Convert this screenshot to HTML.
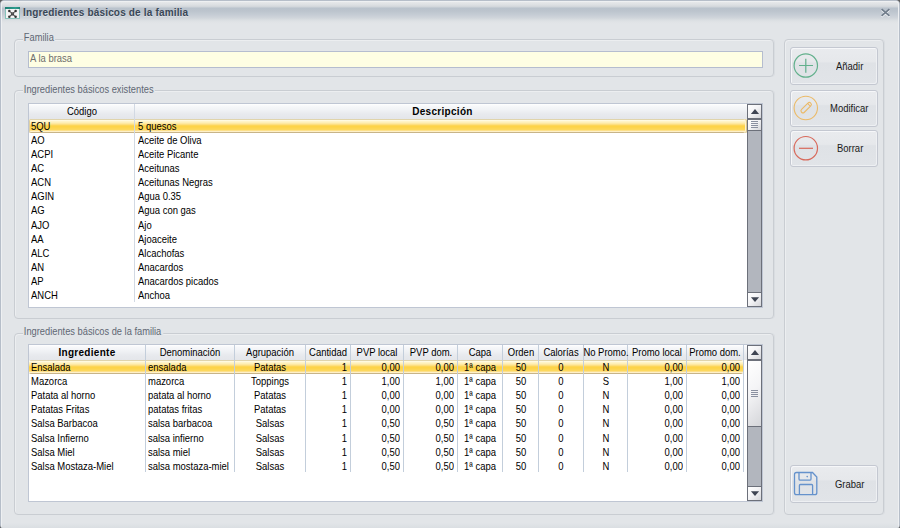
<!DOCTYPE html>
<html><head><meta charset="utf-8"><title>Ingredientes básicos de la familia</title>
<style>
*{margin:0;padding:0;box-sizing:border-box}
html,body{width:900px;height:528px;overflow:hidden;background:#5e5e5e}
body{position:relative;font-family:"Liberation Sans",sans-serif}
.a{position:absolute}
.t{position:absolute;white-space:nowrap;font-size:11px;line-height:14px;color:#000;transform:scaleX(0.86);transform-origin:0 0}
.tr{text-align:right;transform-origin:100% 0}
.tc{text-align:center;transform-origin:50% 0}
.tb{font-size:10px;font-weight:bold;transform:none;letter-spacing:0.3px}
#win{position:absolute;left:0;top:0;width:900px;height:529px;background:#e2e5e8;border:1px solid #b6bec9;border-radius:4px;overflow:hidden}
#win2{position:absolute;left:0;top:0;width:898px;height:527px;border:1px solid #eef0f2;border-bottom:none;border-radius:3px 3px 0 0}
#title{position:absolute;left:0;top:0;width:898px;height:24px;
 background:linear-gradient(to bottom,#e9eaec 0px,#e3e5e7 2px,#dcdfe2 4px,#d0d5da 6px,#b9c2cc 7px,#bcc4cd 10px,#c6cdd5 14px,#d0d5db 17px,#dadee2 19px,#e0e3e6 21px,#e2e5e8 23px)}
.grp{position:absolute;border:1px solid #c9cdd2;border-radius:4px;box-shadow:inset 1px 1px 0 #eceef0,1px 0 0 #d9dde1}
.lbl{color:#5f6774;background:#e2e5e8;padding:0 2px 0 1px;transform:scaleX(0.845)}
.grid{position:absolute;background:#fff;border:1px solid #bfc6d3}
.hdr{position:absolute;height:15px;background:linear-gradient(to bottom,#ffffff 0,#f7f8fa 2px,#f0f2f5 6px,#e8eaee 10px,#e4e6ea 15px)}
.sel{position:absolute;height:14px;border-radius:2px;background:linear-gradient(to bottom,#e0d4ac 0 1px,#fffae0 1px 2px,#fff4c8 2px 3px,#feefb8 3px 4px,#fee8a0 4px 5px,#fddf80 5px 6px,#fdd658 6px 7px,#fdd348 7px 8px,#fdd44c 8px 9px,#fdd654 9px 10px,#fdd85c 10px 11px,#fde08a 11px 12px,#fef0c8 12px 13px,#c8b488 13px 14px)}
.vl{position:absolute;width:1px;background:#c3cedb}
.sb{position:absolute;width:15px;background:#b2b6be;border:1px solid #6c707a}
.sbb{position:absolute;left:0;width:13px;background:linear-gradient(135deg,#ffffff 0%,#f4f4f6 45%,#d5d6da 100%)}
.btn{position:absolute;border:1px solid #c4c8d1;border-radius:3px;background:linear-gradient(to bottom,#e9ebee 0%,#e6e8eb 38%,#dfe2e6 42%,#e1e4e8 100%);box-shadow:inset 1px 1px 0 #f6f7f9,inset -1px -1px 0 #eef0f3}
</style></head>
<body>
<div id="win"><div id="title"></div><div class="a" style="left:0;top:522px;width:898px;height:6px;background:linear-gradient(to bottom,#e2e5e8,#d9dde1)"></div><div id="win2"></div></div><svg class="a" style="left:5px;top:7px" width="15" height="12" viewBox="0 0 15 12">
<defs><linearGradient id="tb" x1="0" x2="1"><stop offset="0" stop-color="#1d7d72"/><stop offset="0.7" stop-color="#2f9f90"/><stop offset="1" stop-color="#1f8276"/></linearGradient></defs>
<rect x="0.5" y="0.5" width="14" height="11" fill="#ececec" stroke="#86c2ba"/>
<rect x="1" y="2" width="13" height="9" fill="#f4f4f4"/>
<rect x="0" y="0" width="15" height="2" fill="url(#tb)"/>
<path d="M4.4 4.1 L10.5 9.7 M10.5 4.1 L4.4 9.7" stroke="#444" stroke-width="1"/>
<circle cx="4.3" cy="3.9" r="1.25" fill="#333"/><circle cx="10.6" cy="3.9" r="1.25" fill="#333"/>
<circle cx="4.3" cy="9.8" r="1.25" fill="#333"/><circle cx="10.6" cy="9.8" r="1.25" fill="#333"/>
<rect x="5.9" y="5.4" width="3.2" height="3.1" fill="#3a3a3a"/>
<rect x="6.4" y="6.6" width="2.2" height="0.6" fill="#9a9a9a"/>
</svg><div class="a" style="left:23px;top:5px;font-size:10px;line-height:16px;font-weight:bold;letter-spacing:0.17px;color:#394757;white-space:nowrap;text-shadow:0 1px 0 rgba(255,255,255,0.35)">Ingredientes básicos de la familia</div><svg class="a" style="left:880px;top:8px" width="11" height="10" viewBox="0 0 11 10">
<path d="M1.6 2.2 L9.4 8.8 M9.4 2.2 L1.6 8.8" stroke="#f4f6f8" stroke-width="1.7"/>
<path d="M1.6 1.2 L9.4 7.8 M9.4 1.2 L1.6 7.8" stroke="#717d8b" stroke-width="1.7"/>
</svg><div class="grp" style="left:14px;top:39px;width:760px;height:38px"></div><div class="t lbl" style="left:23px;top:30px;">Familia</div><div class="a" style="left:28px;top:51px;width:735px;height:17px;background:#fefee3;border:1px solid #b5bdcf"></div><div class="t " style="left:30px;top:51px;color:#6e6e6e">A la brasa</div><div class="grp" style="left:14px;top:90px;width:760px;height:229px"></div><div class="t lbl" style="left:23px;top:82px;">Ingredientes básicos existentes</div><div class="grp" style="left:14px;top:333px;width:760px;height:182px"></div><div class="t lbl" style="left:23px;top:324px;">Ingredientes básicos de la familia</div><div class="grp" style="left:784px;top:39px;width:100px;height:476px"></div><div class="grid" style="left:28px;top:103px;width:735px;height:205px"></div><div class="hdr" style="left:29px;top:104px;width:718px"></div><div class="t tc" style="left:-68.5px;width:300px;top:104px">Código</div><div class="t tc tb" style="left:292.5px;width:300px;top:105px">Descripción</div><div class="sel" style="left:29px;top:119px;width:718px;box-shadow:inset -1px 0 0 #d8c690, inset -2px 0 0 #fff3cc, inset 1px 0 0 #e0d0a0"></div><div class="vl" style="left:134px;top:104px;height:198px;background:#d2d9e3"></div><div class="t" style="left:31px;top:119px">5QU</div><div class="t" style="left:138px;top:119px">5 quesos</div><div class="t" style="left:31px;top:133px">AO</div><div class="t" style="left:138px;top:133px">Aceite de Oliva</div><div class="t" style="left:31px;top:147px">ACPI</div><div class="t" style="left:138px;top:147px">Aceite Picante</div><div class="t" style="left:31px;top:161px">AC</div><div class="t" style="left:138px;top:161px">Aceitunas</div><div class="t" style="left:31px;top:175px">ACN</div><div class="t" style="left:138px;top:175px">Aceitunas Negras</div><div class="t" style="left:31px;top:189px">AGIN</div><div class="t" style="left:138px;top:189px">Agua 0.35</div><div class="t" style="left:31px;top:203px">AG</div><div class="t" style="left:138px;top:203px">Agua con gas</div><div class="t" style="left:31px;top:218px">AJO</div><div class="t" style="left:138px;top:218px">Ajo</div><div class="t" style="left:31px;top:232px">AA</div><div class="t" style="left:138px;top:232px">Ajoaceite</div><div class="t" style="left:31px;top:246px">ALC</div><div class="t" style="left:138px;top:246px">Alcachofas</div><div class="t" style="left:31px;top:260px">AN</div><div class="t" style="left:138px;top:260px">Anacardos</div><div class="t" style="left:31px;top:274px">AP</div><div class="t" style="left:138px;top:274px">Anacardos picados</div><div class="t" style="left:31px;top:288px">ANCH</div><div class="t" style="left:138px;top:288px">Anchoa</div><div class="sb" style="left:747px;top:104px;height:203px"><div class="sbb" style="top:0;height:14px;border-bottom:1px solid #6c707a"></div><svg class="a" style="left:2px;top:3px" width="10" height="7" viewBox="0 0 10 7"><path d="M0.9 6 L5 1.1 L9.1 6Z" fill="#3e4452"/></svg><div class="sbb" style="top:14px;height:12px;border-top:1px solid #6c707a;border-bottom:1px solid #6c707a"></div><div class="a" style="left:3px;top:16px;width:7px;height:1px;background:#8a90a0"></div><div class="a" style="left:3px;top:18px;width:7px;height:1px;background:#8a90a0"></div><div class="a" style="left:3px;top:20px;width:7px;height:1px;background:#8a90a0"></div><div class="a" style="left:3px;top:22px;width:7px;height:1px;background:#8a90a0"></div><div class="sbb" style="top:187px;height:14px;border-top:1px solid #6c707a"></div><svg class="a" style="left:2px;top:191px" width="10" height="7" viewBox="0 0 10 7"><path d="M0.9 1.2 L9.1 1.2 L5 5.9Z" fill="#3e4452"/></svg></div><div class="grid" style="left:28px;top:344px;width:735px;height:158px"></div><div class="hdr" style="left:29px;top:345px;width:718px"></div><div class="sel" style="left:29px;top:360px;width:714px"></div><div class="vl" style="left:145px;top:345px;height:127px"></div><div class="vl" style="left:234px;top:345px;height:127px"></div><div class="vl" style="left:305px;top:345px;height:127px"></div><div class="vl" style="left:350px;top:345px;height:127px"></div><div class="vl" style="left:403px;top:345px;height:127px"></div><div class="vl" style="left:457px;top:345px;height:127px"></div><div class="vl" style="left:502px;top:345px;height:127px"></div><div class="vl" style="left:538px;top:345px;height:127px"></div><div class="vl" style="left:583px;top:345px;height:127px"></div><div class="vl" style="left:627px;top:345px;height:127px"></div><div class="vl" style="left:686px;top:345px;height:127px"></div><div class="vl" style="left:743px;top:345px;height:127px"></div><div class="t tc tb" style="left:-63px;width:300px;top:346px">Ingrediente</div><div class="t tc" style="left:40px;width:300px;top:345px">Denominación</div><div class="t tc" style="left:120px;width:300px;top:345px">Agrupación</div><div class="t tc" style="left:178px;width:300px;top:345px">Cantidad</div><div class="t tc" style="left:227px;width:300px;top:345px">PVP local</div><div class="t tc" style="left:280.5px;width:300px;top:345px">PVP dom.</div><div class="t tc" style="left:330px;width:300px;top:345px">Capa</div><div class="t tc" style="left:370.5px;width:300px;top:345px">Orden</div><div class="t tc" style="left:411px;width:300px;top:345px">Calorías</div><div class="t tc" style="left:455.5px;width:300px;top:345px">No Promo.</div><div class="t tc" style="left:507px;width:300px;top:345px">Promo local</div><div class="t tc" style="left:565px;width:300px;top:345px">Promo dom.</div><div class="t" style="left:31px;top:360px">Ensalada</div><div class="t" style="left:148px;top:360px">ensalada</div><div class="t tc" style="left:120px;width:300px;top:360px">Patatas</div><div class="t tr" style="left:47px;width:300px;top:360px">1</div><div class="t tr" style="left:100px;width:300px;top:360px">0,00</div><div class="t tr" style="left:154px;width:300px;top:360px">0,00</div><div class="t tc" style="left:330px;width:300px;top:360px">1ª capa</div><div class="t tc" style="left:370.5px;width:300px;top:360px">50</div><div class="t tc" style="left:411px;width:300px;top:360px">0</div><div class="t tc" style="left:455.5px;width:300px;top:360px">N</div><div class="t tr" style="left:383px;width:300px;top:360px">0,00</div><div class="t tr" style="left:440px;width:300px;top:360px">0,00</div><div class="t" style="left:31px;top:374px">Mazorca</div><div class="t" style="left:148px;top:374px">mazorca</div><div class="t tc" style="left:120px;width:300px;top:374px">Toppings</div><div class="t tr" style="left:47px;width:300px;top:374px">1</div><div class="t tr" style="left:100px;width:300px;top:374px">1,00</div><div class="t tr" style="left:154px;width:300px;top:374px">1,00</div><div class="t tc" style="left:330px;width:300px;top:374px">1ª capa</div><div class="t tc" style="left:370.5px;width:300px;top:374px">50</div><div class="t tc" style="left:411px;width:300px;top:374px">0</div><div class="t tc" style="left:455.5px;width:300px;top:374px">S</div><div class="t tr" style="left:383px;width:300px;top:374px">1,00</div><div class="t tr" style="left:440px;width:300px;top:374px">1,00</div><div class="t" style="left:31px;top:388px">Patata al horno</div><div class="t" style="left:148px;top:388px">patata al horno</div><div class="t tc" style="left:120px;width:300px;top:388px">Patatas</div><div class="t tr" style="left:47px;width:300px;top:388px">1</div><div class="t tr" style="left:100px;width:300px;top:388px">0,00</div><div class="t tr" style="left:154px;width:300px;top:388px">0,00</div><div class="t tc" style="left:330px;width:300px;top:388px">1ª capa</div><div class="t tc" style="left:370.5px;width:300px;top:388px">50</div><div class="t tc" style="left:411px;width:300px;top:388px">0</div><div class="t tc" style="left:455.5px;width:300px;top:388px">N</div><div class="t tr" style="left:383px;width:300px;top:388px">0,00</div><div class="t tr" style="left:440px;width:300px;top:388px">0,00</div><div class="t" style="left:31px;top:402px">Patatas Fritas</div><div class="t" style="left:148px;top:402px">patatas fritas</div><div class="t tc" style="left:120px;width:300px;top:402px">Patatas</div><div class="t tr" style="left:47px;width:300px;top:402px">1</div><div class="t tr" style="left:100px;width:300px;top:402px">0,00</div><div class="t tr" style="left:154px;width:300px;top:402px">0,00</div><div class="t tc" style="left:330px;width:300px;top:402px">1ª capa</div><div class="t tc" style="left:370.5px;width:300px;top:402px">50</div><div class="t tc" style="left:411px;width:300px;top:402px">0</div><div class="t tc" style="left:455.5px;width:300px;top:402px">N</div><div class="t tr" style="left:383px;width:300px;top:402px">0,00</div><div class="t tr" style="left:440px;width:300px;top:402px">0,00</div><div class="t" style="left:31px;top:416px">Salsa Barbacoa</div><div class="t" style="left:148px;top:416px">salsa barbacoa</div><div class="t tc" style="left:120px;width:300px;top:416px">Salsas</div><div class="t tr" style="left:47px;width:300px;top:416px">1</div><div class="t tr" style="left:100px;width:300px;top:416px">0,50</div><div class="t tr" style="left:154px;width:300px;top:416px">0,50</div><div class="t tc" style="left:330px;width:300px;top:416px">1ª capa</div><div class="t tc" style="left:370.5px;width:300px;top:416px">50</div><div class="t tc" style="left:411px;width:300px;top:416px">0</div><div class="t tc" style="left:455.5px;width:300px;top:416px">N</div><div class="t tr" style="left:383px;width:300px;top:416px">0,00</div><div class="t tr" style="left:440px;width:300px;top:416px">0,00</div><div class="t" style="left:31px;top:431px">Salsa Infierno</div><div class="t" style="left:148px;top:431px">salsa infierno</div><div class="t tc" style="left:120px;width:300px;top:431px">Salsas</div><div class="t tr" style="left:47px;width:300px;top:431px">1</div><div class="t tr" style="left:100px;width:300px;top:431px">0,50</div><div class="t tr" style="left:154px;width:300px;top:431px">0,50</div><div class="t tc" style="left:330px;width:300px;top:431px">1ª capa</div><div class="t tc" style="left:370.5px;width:300px;top:431px">50</div><div class="t tc" style="left:411px;width:300px;top:431px">0</div><div class="t tc" style="left:455.5px;width:300px;top:431px">N</div><div class="t tr" style="left:383px;width:300px;top:431px">0,00</div><div class="t tr" style="left:440px;width:300px;top:431px">0,00</div><div class="t" style="left:31px;top:445px">Salsa Miel</div><div class="t" style="left:148px;top:445px">salsa miel</div><div class="t tc" style="left:120px;width:300px;top:445px">Salsas</div><div class="t tr" style="left:47px;width:300px;top:445px">1</div><div class="t tr" style="left:100px;width:300px;top:445px">0,50</div><div class="t tr" style="left:154px;width:300px;top:445px">0,50</div><div class="t tc" style="left:330px;width:300px;top:445px">1ª capa</div><div class="t tc" style="left:370.5px;width:300px;top:445px">50</div><div class="t tc" style="left:411px;width:300px;top:445px">0</div><div class="t tc" style="left:455.5px;width:300px;top:445px">N</div><div class="t tr" style="left:383px;width:300px;top:445px">0,00</div><div class="t tr" style="left:440px;width:300px;top:445px">0,00</div><div class="t" style="left:31px;top:459px">Salsa Mostaza-Miel</div><div class="t" style="left:148px;top:459px">salsa mostaza-miel</div><div class="t tc" style="left:120px;width:300px;top:459px">Salsas</div><div class="t tr" style="left:47px;width:300px;top:459px">1</div><div class="t tr" style="left:100px;width:300px;top:459px">0,50</div><div class="t tr" style="left:154px;width:300px;top:459px">0,50</div><div class="t tc" style="left:330px;width:300px;top:459px">1ª capa</div><div class="t tc" style="left:370.5px;width:300px;top:459px">50</div><div class="t tc" style="left:411px;width:300px;top:459px">0</div><div class="t tc" style="left:455.5px;width:300px;top:459px">N</div><div class="t tr" style="left:383px;width:300px;top:459px">0,00</div><div class="t tr" style="left:440px;width:300px;top:459px">0,00</div><div class="sb" style="left:747px;top:345px;height:156px"><div class="sbb" style="top:0;height:14px;border-bottom:1px solid #6c707a"></div><svg class="a" style="left:2px;top:3px" width="10" height="7" viewBox="0 0 10 7"><path d="M0.9 6 L5 1.1 L9.1 6Z" fill="#3e4452"/></svg><div class="sbb" style="top:14px;height:67px;border-top:1px solid #6c707a;border-bottom:1px solid #6c707a"></div><div class="a" style="left:3px;top:44px;width:7px;height:1px;background:#8a90a0"></div><div class="a" style="left:3px;top:46px;width:7px;height:1px;background:#8a90a0"></div><div class="a" style="left:3px;top:48px;width:7px;height:1px;background:#8a90a0"></div><div class="a" style="left:3px;top:50px;width:7px;height:1px;background:#8a90a0"></div><div class="sbb" style="top:140px;height:14px;border-top:1px solid #6c707a"></div><svg class="a" style="left:2px;top:144px" width="10" height="7" viewBox="0 0 10 7"><path d="M0.9 1.2 L9.1 1.2 L5 5.9Z" fill="#3e4452"/></svg></div><div class="btn" style="left:790px;top:47px;width:88px;height:38px"></div><svg class="a" style="left:792px;top:52px" width="28" height="28" viewBox="0 0 28 28">
<circle cx="13.8" cy="13.5" r="11.7" fill="none" stroke="#62b08c" stroke-width="1.2"/>
<path d="M7 13.5 H21 M13.8 6.8 V20.7" stroke="#62b08c" stroke-width="1.2"/></svg><div class="t " style="left:836px;top:59px;color:#1a1a1a">Añadir</div><div class="btn" style="left:790px;top:90px;width:88px;height:37px"></div><svg class="a" style="left:792px;top:94px" width="28" height="28" viewBox="0 0 28 28">
<circle cx="13.8" cy="14" r="11.7" fill="none" stroke="#ebba68" stroke-width="1.1"/>
<g transform="rotate(45 13.8 14)"><rect x="11.8" y="7" width="4" height="13" rx="2" fill="none" stroke="#ebba68" stroke-width="1.1"/>
<path d="M11.8 9.5 H15.8" stroke="#ebb460" stroke-width="1"/></g></svg><div class="t " style="left:830px;top:101px;color:#1a1a1a">Modificar</div><div class="btn" style="left:790px;top:130px;width:88px;height:37px"></div><svg class="a" style="left:792px;top:134px" width="28" height="28" viewBox="0 0 28 28">
<circle cx="13.8" cy="14.2" r="11.7" fill="none" stroke="#d86a5c" stroke-width="1.2"/>
<path d="M7 14.3 H21" stroke="#d86a5c" stroke-width="1.2"/></svg><div class="t " style="left:837px;top:141px;color:#1a1a1a">Borrar</div><div class="btn" style="left:790px;top:465px;width:88px;height:38px"></div><svg class="a" style="left:793px;top:471px" width="26" height="26" viewBox="0 0 26 26">
<path d="M3.5 1.5 H19.5 L23.8 6 V21.7 Q23.8 23.7 21.8 23.7 H3.5 Q1.5 23.7 1.5 21.7 V3.5 Q1.5 1.5 3.5 1.5Z" fill="none" stroke="#6592cc" stroke-width="1.3"/>
<path d="M6 1.5 V8 Q6 9.2 7.2 9.2 H16.8 Q18 9.2 18 8 V1.5" fill="none" stroke="#6592cc" stroke-width="1.3"/>
<path d="M6.4 23.7 V14.5 Q6.4 13.5 7.4 13.5 H18.6 Q19.6 13.5 19.6 14.5 V23.7" fill="none" stroke="#6592cc" stroke-width="1.3"/>
<circle cx="14.2" cy="5.6" r="0.8" fill="#6592cc"/></svg><div class="t " style="left:835px;top:477px;color:#1a1a1a">Grabar</div>
</body></html>
